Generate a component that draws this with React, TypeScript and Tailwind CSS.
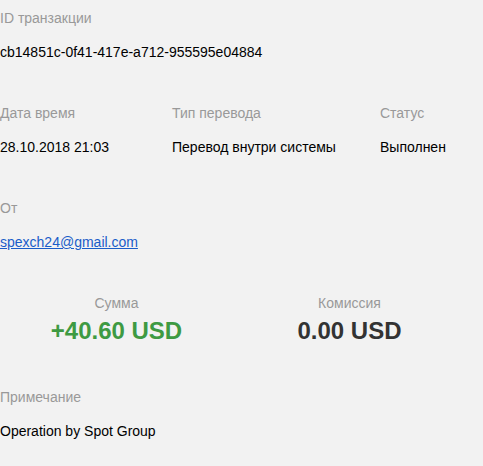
export default function App() {
  const font = { fontFamily: '"Liberation Sans", Arial, sans-serif' };
  return (
    <div className="min-h-screen w-full bg-[#f2f2f2] text-[14px] text-black" style={font}>
      <div className="flex flex-col pt-[8px]">
        <div className="flex flex-col">
          <div className="leading-[20px] text-[#999]">ID транзакции</div>
          <div className="mt-[14px] leading-[20px]">cb14851c-0f41-417e-a712-955595e04884</div>
        </div>

        <div className="mt-[41px] grid grid-cols-[172px_208px_1fr]">
          <div className="flex flex-col">
            <div className="leading-[20px] text-[#999]">Дата время</div>
            <div className="mt-[14px] leading-[20px]">28.10.2018 21:03</div>
          </div>
          <div className="flex flex-col">
            <div className="leading-[20px] text-[#999]">Тип перевода</div>
            <div className="mt-[14px] leading-[20px]">Перевод внутри системы</div>
          </div>
          <div className="flex flex-col">
            <div className="leading-[20px] text-[#999]">Статус</div>
            <div className="mt-[14px] leading-[20px]">Выполнен</div>
          </div>
        </div>

        <div className="mt-[41px] flex flex-col">
          <div className="leading-[20px] text-[#999]">От</div>
          <div className="mt-[14px] leading-[20px]">
            <a href="#" className="text-[#1a5dc9] underline">spexch24@gmail.com</a>
          </div>
        </div>

        <div className="mt-[41px] grid w-[466px] grid-cols-2">
          <div className="flex flex-col items-center">
            <div className="leading-[20px] text-[#999]">Сумма</div>
            <div className="mt-[4px] text-[24px] font-bold leading-[28px] text-[#3e9a42]">+40.60 USD</div>
          </div>
          <div className="flex flex-col items-center">
            <div className="leading-[20px] text-[#999]">Комиссия</div>
            <div className="mt-[4px] text-[24px] font-bold leading-[28px] text-[#333]">0.00 USD</div>
          </div>
        </div>

        <div className="mt-[42px] flex flex-col">
          <div className="leading-[20px] text-[#999]">Примечание</div>
          <div className="mt-[14px] leading-[20px]">Operation by Spot Group</div>
        </div>
      </div>
    </div>
  );
}
